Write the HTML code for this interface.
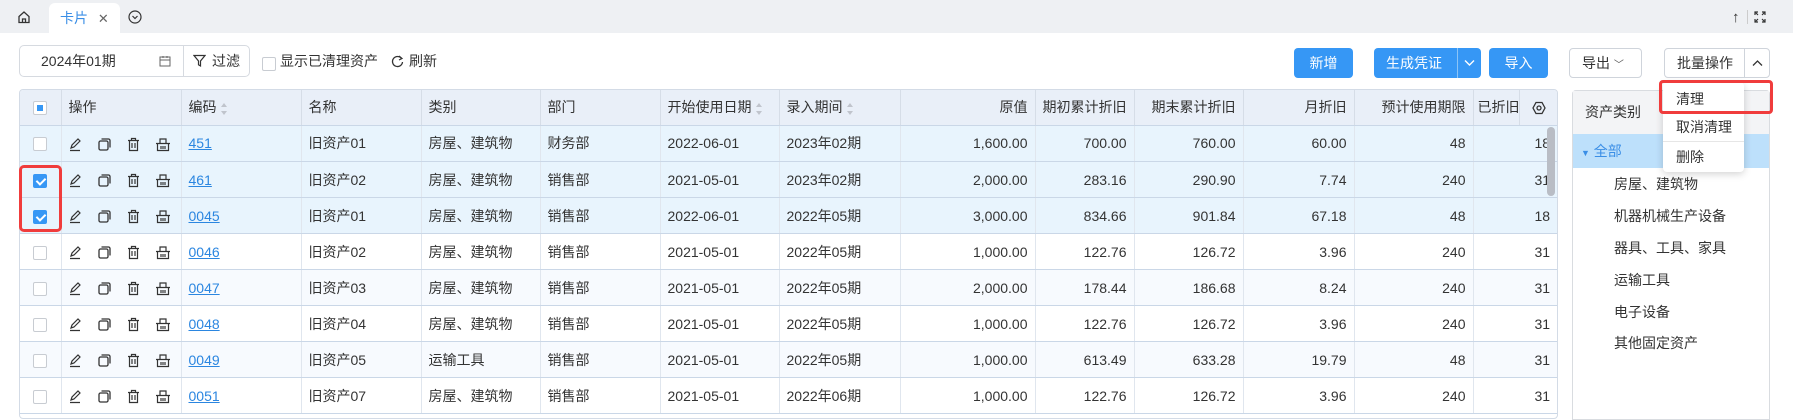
<!DOCTYPE html>
<html><head><meta charset="utf-8">
<style>
*{box-sizing:border-box;margin:0;padding:0}
body{width:1793px;height:410px;overflow:hidden;background:#fff;font-family:"Liberation Sans","Noto Sans CJK SC",sans-serif;font-size:14px;color:#333;position:relative}
.abs{position:absolute}
.topbar{left:0;top:0;width:1793px;height:33px;background:#eef0f3}
.tab{left:49px;top:3px;width:71px;height:30px;background:#fff;border-radius:6px 6px 0 0;color:#3a8ee6;font-size:14px;line-height:30px;padding-left:11px}
.btn{height:30px;border-radius:4px;line-height:30px;text-align:center;font-size:14px}
.pri{background:#3697f5;color:#fff}
.sec{background:#fff;border:1px solid #cfd4db;color:#333;line-height:28px}
.tbl{left:19px;top:89px;width:1539px;height:330px;border:1px solid #d3dbe6;border-radius:4px;overflow:hidden}
table{border-collapse:collapse;table-layout:fixed;width:1538px}
td,th{height:36px;font-weight:normal;white-space:nowrap;overflow:hidden;padding:0 7px;text-align:left;border-right:1px solid #e0e6ee;border-bottom:1px solid #cad7e7}
th{background:#e9eff8;height:35px;border-right:1px solid #d6dde7}
.r{text-align:right;padding-right:7px}
tr.b td{background:#e8f4fd}
tr.w td{background:#fff}
tr.g td{background:#f7fafe}
a{color:#2b86e0;text-decoration:underline}
.cb{display:inline-block;width:14px;height:14px;border:1px solid #c8ccd2;border-radius:2px;background:#fff;vertical-align:middle;position:relative}
.cb.on{background:#3697f5;border-color:#3697f5}
.cb.on:after{content:"";position:absolute;left:4px;top:1px;width:4px;height:7px;border:solid #fff;border-width:0 2px 2px 0;transform:rotate(45deg)}
.cb.ind:after{content:"";position:absolute;left:3px;top:3px;width:6px;height:6px;background:#3697f5}
.ic{display:inline-block;vertical-align:middle;margin-right:14px}
.sort{display:inline-block;vertical-align:middle;margin-left:4px;width:7px;height:12px;position:relative}
.sort:before,.sort:after{content:"";position:absolute;left:0;border-left:3.5px solid transparent;border-right:3.5px solid transparent}
.sort:before{top:0;border-bottom:4px solid #c0c4cc}
.sort:after{bottom:0;border-top:4px solid #c0c4cc}
.panel{left:1572px;top:90px;width:198px;height:330px;border:1px solid #d9dce0;border-radius:4px 4px 0 0}
.tree{left:1614px;font-size:14px;color:#333;line-height:20px}
</style></head><body>
<div class="abs topbar"></div>
<svg class="abs" style="left:17px;top:10px" width="14" height="14" viewBox="0 0 14 14"><path d="M2 6.5L7 2l5 4.5V12.5H2z M5.5 12.5V9h3v3.5" fill="none" stroke="#333" stroke-width="1.3"/></svg>
<div class="abs tab">卡片 <span style="color:#666;font-size:13px;margin-left:6px">✕</span></div>
<svg class="abs" style="left:128px;top:10px" width="14" height="14" viewBox="0 0 14 14"><circle cx="7" cy="7" r="6" fill="none" stroke="#333" stroke-width="1.2"/><path d="M4.5 6l2.5 2.5L9.5 6" fill="none" stroke="#333" stroke-width="1.2"/></svg>
<div class="abs" style="left:1732px;top:9px;font-size:15px;color:#333">↑</div>
<div class="abs" style="left:1747px;top:10px;width:1px;height:14px;background:#ccc"></div>
<svg class="abs" style="left:1754px;top:11px" width="12" height="12" viewBox="0 0 12 12"><path d="M1 4V1h3M8 1h3v3M11 8v3H8M4 11H1V8M1 1l3 3M11 1L8 4M11 11L8 8M1 11l3-3" fill="none" stroke="#333" stroke-width="1.2"/></svg>

<!-- toolbar -->
<div class="abs" style="left:19px;top:45px;width:231px;height:32px;border:1px solid #d6dae0;border-radius:5px"></div>
<div class="abs" style="left:183px;top:46px;width:1px;height:30px;background:#d6dae0"></div>
<div class="abs" style="left:41px;top:52px;line-height:18px">2024年01期</div>
<svg class="abs" style="left:159px;top:55px" width="12" height="12" viewBox="0 0 12 12"><rect x="1" y="2" width="10" height="9" fill="none" stroke="#666" stroke-width="1"/><path d="M1 5h10M4 1v2M8 1v2" stroke="#666"/></svg>
<svg class="abs" style="left:193px;top:54px" width="13" height="14" viewBox="0 0 13 14"><path d="M1 1.5h11L7.5 7v5l-2-1.2V7z" fill="none" stroke="#333" stroke-width="1.2"/></svg>
<div class="abs" style="left:212px;top:52px;line-height:18px">过滤</div>
<div class="abs cb" style="left:262px;top:55px"></div>
<div class="abs" style="left:280px;top:52px;line-height:18px">显示已清理资产</div>
<svg class="abs" style="left:391px;top:55px" width="13" height="13" viewBox="0 0 13 13"><path d="M10.5 3.5A5 5 0 1 0 11.5 7" fill="none" stroke="#333" stroke-width="1.3"/><path d="M8 1l3 2.5-3 1.5" fill="none" stroke="#333" stroke-width="1.2"/></svg>
<div class="abs" style="left:409px;top:52px;line-height:18px">刷新</div>

<div class="abs btn pri" style="left:1294px;top:48px;width:59px">新增</div>
<div class="abs btn pri" style="left:1374px;top:48px;width:107px;text-align:left;padding-left:12px">生成凭证</div>
<div class="abs" style="left:1457px;top:48px;width:1px;height:30px;background:#8cc4f7"></div>
<svg class="abs" style="left:1464px;top:59px" width="11" height="8" viewBox="0 0 11 8"><path d="M1 1.5l4.5 4.5L10 1.5" fill="none" stroke="#fff" stroke-width="1.4"/></svg>
<div class="abs btn pri" style="left:1489px;top:48px;width:59px">导入</div>
<div class="abs btn sec" style="left:1569px;top:48px;width:73px;text-align:left;padding-left:12px">导出 <span style="font-size:10px;color:#555">﹀</span></div>
<div class="abs btn sec" style="left:1664px;top:48px;width:106px;text-align:left;padding-left:12px">批量操作</div>
<div class="abs" style="left:1744px;top:49px;width:1px;height:28px;background:#cfd4db"></div>
<svg class="abs" style="left:1752px;top:59px" width="11" height="8" viewBox="0 0 11 8"><path d="M1 6.5l4.5-4.5L10 6.5" fill="none" stroke="#333" stroke-width="1.3"/></svg>

<!-- table -->
<div class="abs tbl">
<table>
<colgroup><col style="width:41px"><col style="width:120px"><col style="width:120px"><col style="width:120px"><col style="width:119px"><col style="width:120px"><col style="width:119px"><col style="width:121px"><col style="width:135px"><col style="width:99px"><col style="width:109px"><col style="width:111px"><col style="width:119px"><col style="width:46px"><col style="width:39px"></colgroup>
<tr><th style="text-align:center;padding:0"><span class="cb ind"></span></th><th>操作</th><th>编码<span class="sort"></span></th><th>名称</th><th>类别</th><th>部门</th><th>开始使用日期<span class="sort"></span></th><th>录入期间<span class="sort"></span></th><th class="r">原值</th><th class="r">期初累计折旧</th><th class="r">期末累计折旧</th><th class="r">月折旧</th><th class="r">预计使用期限</th><th style="padding:0 0 0 4px;text-overflow:clip">已折旧</th><th style="text-align:center;padding:0"><svg width="14" height="14" viewBox="0 0 14 14" style="vertical-align:middle"><path d="M4 1.5h6L13 7l-3 5.5H4L1 7z" fill="none" stroke="#333" stroke-width="1.3"/><circle cx="7" cy="7" r="2" fill="none" stroke="#333" stroke-width="1.3"/></svg></th></tr>
</table>
<div id="body"></div>
<div class="abs" style="left:1527px;top:37px;width:8px;height:69px;background:#b9bdc5;border-radius:4px"></div>
</div>

<!-- right panel -->
<div class="abs panel">
<div style="height:43px;background:#f3f4f6;line-height:43px;padding-left:12px">资产类别</div>
<div style="height:34px;background:#bde0fb;line-height:34px;padding-left:8px;color:#3a8ee6"><span style="font-size:9px">▼</span> 全部</div>
</div>
<div class="abs tree" style="top:174px">房屋、建筑物</div>
<div class="abs tree" style="top:206px">机器机械生产设备</div>
<div class="abs tree" style="top:238px">器具、工具、家具</div>
<div class="abs tree" style="top:270px">运输工具</div>
<div class="abs tree" style="top:302px">电子设备</div>
<div class="abs tree" style="top:333px">其他固定资产</div>

<!-- dropdown -->
<div class="abs" style="left:1663px;top:82px;width:81px;height:90px;background:#fff;border-radius:4px;box-shadow:0 2px 8px rgba(0,0,0,.18)">
<div style="height:30px;line-height:34px;padding-left:13px;border-bottom:1px solid #e6e6e6">清理</div>
<div style="height:30px;line-height:30px;padding-left:13px;border-bottom:1px solid #e6e6e6">取消清理</div>
<div style="height:30px;line-height:30px;padding-left:13px">删除</div>
</div>
<div class="abs" style="left:1659px;top:80px;width:114px;height:34px;border:3px solid #f03c3c;border-radius:4px"></div>
<div class="abs" style="left:19px;top:165px;width:43px;height:67px;border:3px solid #f03c3c;border-radius:5px"></div>

<script>
var rows=[
["b",0,"451","旧资产01","房屋、建筑物","财务部","2022-06-01","2023年02期","1,600.00","700.00","760.00","60.00","48","18"],
["b",1,"461","旧资产02","房屋、建筑物","销售部","2021-05-01","2023年02期","2,000.00","283.16","290.90","7.74","240","31"],
["b",1,"0045","旧资产01","房屋、建筑物","销售部","2022-06-01","2022年05期","3,000.00","834.66","901.84","67.18","48","18"],
["w",0,"0046","旧资产02","房屋、建筑物","销售部","2021-05-01","2022年05期","1,000.00","122.76","126.72","3.96","240","31"],
["g",0,"0047","旧资产03","房屋、建筑物","销售部","2021-05-01","2022年05期","2,000.00","178.44","186.68","8.24","240","31"],
["w",0,"0048","旧资产04","房屋、建筑物","销售部","2021-05-01","2022年05期","1,000.00","122.76","126.72","3.96","240","31"],
["g",0,"0049","旧资产05","运输工具","销售部","2021-05-01","2022年05期","1,000.00","613.49","633.28","19.79","48","31"],
["w",0,"0051","旧资产07","房屋、建筑物","销售部","2021-05-01","2022年06期","1,000.00","122.76","126.72","3.96","240","31"]];
var ic='<svg class="ic" width="15" height="15" viewBox="0 0 15 15"><path d="M3 11l1-3 6-6 2 2-6 6zM2 13.5h10" fill="none" stroke="#333" stroke-width="1.2"/></svg>'+
'<svg class="ic" width="15" height="15" viewBox="0 0 15 15"><rect x="2" y="4" width="9" height="9" rx="1.5" fill="none" stroke="#333" stroke-width="1.3"/><path d="M4.5 2h7a1.5 1.5 0 0 1 1.5 1.5v7" fill="none" stroke="#333" stroke-width="1.3"/></svg>'+
'<svg class="ic" width="15" height="15" viewBox="0 0 15 15"><path d="M2 3.5h11M5.5 3.5V1.5h4v2M3.5 3.5v10h8v-10M6 6v5M9 6v5" fill="none" stroke="#333" stroke-width="1.2"/></svg>'+
'<svg class="ic" width="16" height="15" viewBox="0 0 16 15"><path d="M1 6.5h14M2.5 6.5v7h11v-7M5 6.5V2h6v4.5M6 9v3M8 9v3M10 9v3" fill="none" stroke="#333" stroke-width="1.2"/></svg>';
var h='<table><colgroup><col style="width:41px"><col style="width:120px"><col style="width:120px"><col style="width:120px"><col style="width:119px"><col style="width:120px"><col style="width:119px"><col style="width:121px"><col style="width:135px"><col style="width:99px"><col style="width:109px"><col style="width:111px"><col style="width:119px"><col style="width:85px"></colgroup>';
rows.forEach(function(r){
h+='<tr class="'+r[0]+'"><td style="text-align:center;padding:0"><span class="cb'+(r[1]?' on':'')+'"></span></td><td style="padding-left:6px">'+ic+'</td><td><a>'+r[2]+'</a></td><td>'+r[3]+'</td><td>'+r[4]+'</td><td>'+r[5]+'</td><td>'+r[6]+'</td><td>'+r[7]+'</td><td class="r">'+r[8]+'</td><td class="r">'+r[9]+'</td><td class="r">'+r[10]+'</td><td class="r">'+r[11]+'</td><td class="r">'+r[12]+'</td><td style="padding-left:61px;border-right:0">'+r[13]+'</td></tr>';});
h+='</table>';
document.getElementById('body').innerHTML=h;
</script>
</body></html>
